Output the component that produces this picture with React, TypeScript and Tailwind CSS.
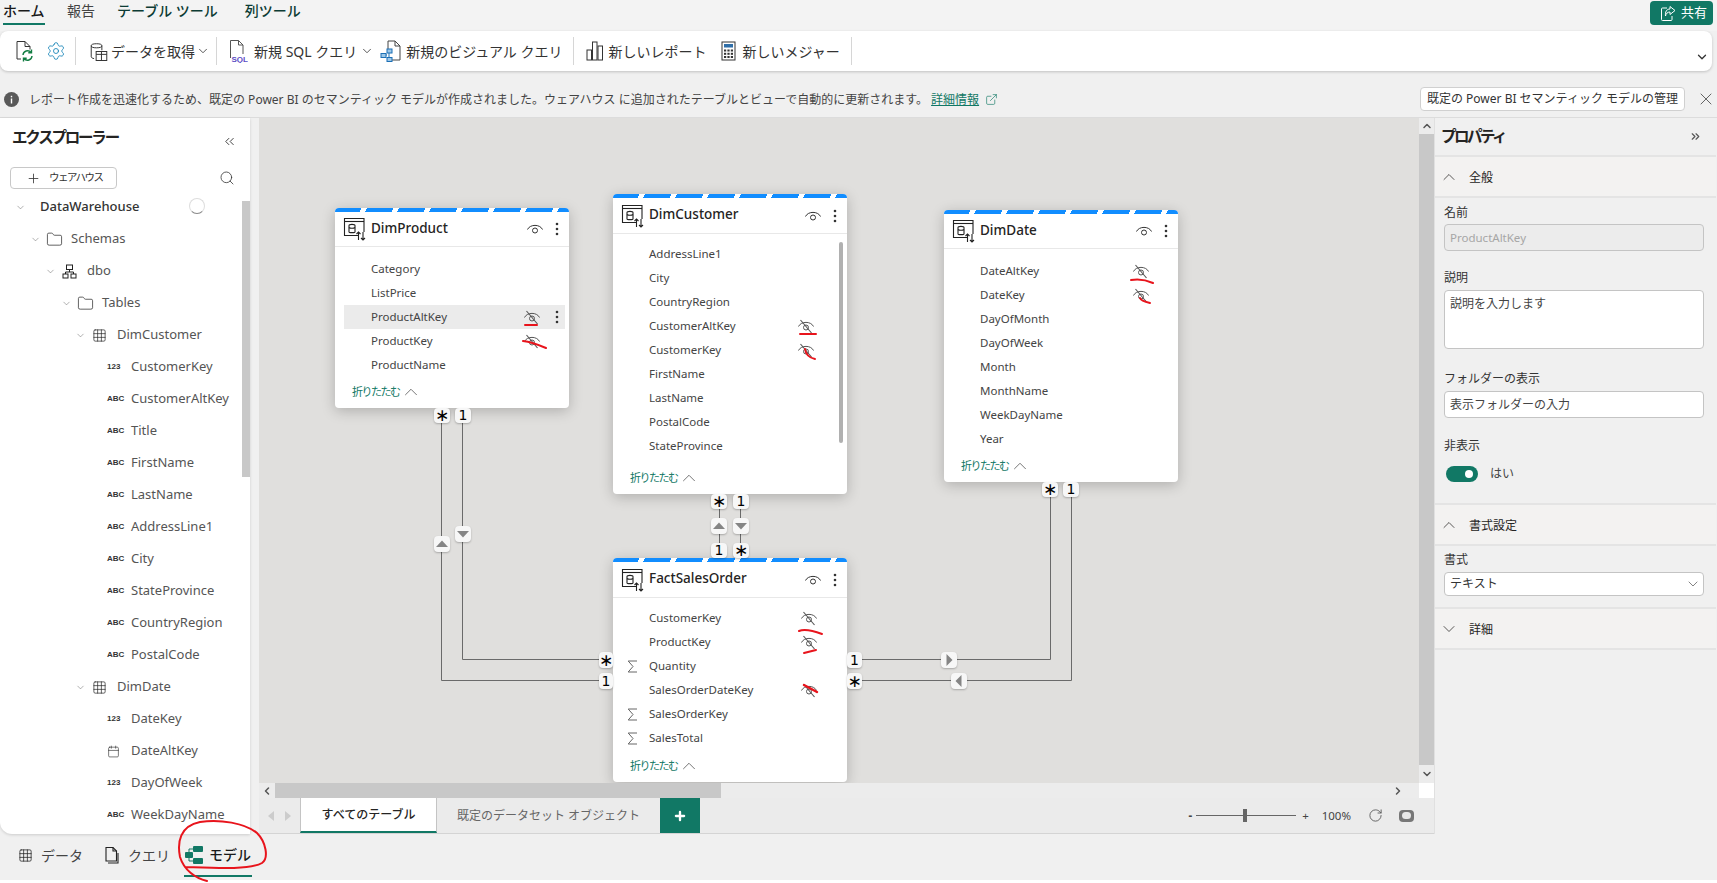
import React from "react";
import { ChevronDown, ChevronUp, ChevronsLeft, ChevronsRight, Plus, Search, X, RotateCw, ExternalLink, Grid3x3, Folder, Calendar, Settings } from "lucide-react";

const Eye = ({ hidden = false }: { hidden?: boolean }) => (
  <svg width="16" height="16" viewBox="0 0 16 16" fill="none" stroke={hidden ? "#555" : "#333"} strokeWidth="1">
    <path d="M0.5 8.5C3 3 13 3 15.500 8.500" />
    <circle cx="8" cy="9.500" r="2.500" />
    {hidden && <path d="M2.500 2L13.500 15" strokeWidth="1.100" />}
  </svg>
);

const Kebab = () => (
  <svg width="4" height="14" viewBox="0 0 4 14" fill="#333"><circle cx="2" cy="2" r="1.300" /><circle cx="2" cy="7" r="1.300" /><circle cx="2" cy="12" r="1.300" /></svg>
);

const TableIcon = () => (
  <svg width="24" height="24" viewBox="0 0 24 24" fill="none" stroke="#222" strokeWidth="1.100">
    <path d="M16 18.500H1.500V1.500H21V15" />
    <path d="M1.500 4.500H21" />
    <path d="M6 8.500c0-1.500 6-1.500 6 0v6.500c0 1-6 1-6 0z" />
    <path d="M6 10.500c1 1 5 1 6 0" />
    <path d="M15.500 23V15M13.500 17l2-2 2 2" />
    <path d="M20 15v8M18 21l2 2 2-2" />
  </svg>
);

const Sigma = () => (
  <svg width="11" height="13" viewBox="0 0 11 13" fill="none" stroke="#666" strokeWidth="1"><path d="M10 1H1.200L6 6.500 1.200 12H10" /></svg>
);

type Col = { name: string; hidden?: boolean; sigma?: boolean; hover?: boolean };

const TableNode = ({ title, cols, pos, eyeMargin, scroll, pt }: { title: string; cols: Col[]; pos: string; eyeMargin: string; scroll?: boolean; pt: string }) => (
  <div className={`absolute ${pos} w-[234px] bg-white rounded-sm flex flex-col shadow-[0_3px_14px_rgba(0,0,0,0.22)]`}>
    <div className="h-1 rounded-t-sm bg-[repeating-linear-gradient(115deg,#118dff_0,#118dff_24px,#ffffff_24px,#ffffff_29px)]" />
    <div className="h-[35px] flex items-center pl-2 border-b border-[#e8e8e8] box-content">
      <TableIcon />
      <span className="ml-[4px] flex-1 text-[13.5px] font-medium text-[#252423] -mt-[2px]">{title}</span>
      <span className="mr-[12px]"><Eye /></span>
      <span className="mr-[10px]"><Kebab /></span>
    </div>
    <div className={`flex flex-col ${pt}`}>
      {cols.map((c) => (
        <div key={c.name} className={`h-6 flex items-center text-[11.5px] text-[#444] ml-[9px] ${c.hover ? "bg-[#ebebeb] mr-[4px]" : "mr-[9px]"}`}>
          <span className="w-[27px] pl-[5px] flex items-center">{c.sigma && <Sigma />}</span>
          <span className="flex-1">{c.name}</span>
          {c.hidden && <span className={c.hover ? "mr-[25px]" : eyeMargin}><Eye hidden /></span>}
          {c.hover && <span className="absolute left-[220px]"><Kebab /></span>}
        </div>
      ))}
    </div>
    {scroll && <div className="absolute right-[4px] top-[48px] w-1 h-[201px] rounded bg-[#b0b0b0]" />}
    <div className="mt-auto h-8 flex items-center pl-[17px] text-[11px] tracking-[-1.5px] text-[#117865]">
      折りたたむ <ChevronUp size={22} strokeWidth={0.800} className="text-[#444]" />
    </div>
  </div>
);

const Badge = ({ pos, children }: { pos: string; children: React.ReactNode }) => (
  <div className={`absolute ${pos} bg-[#f7f7f7] rounded-sm shadow-[0_1px_2px_rgba(0,0,0,0.25)] flex items-center justify-center text-[14px] text-black font-['DejaVu_Sans',sans-serif]`}>{children}</div>
);

const Star = () => <span className="text-[17px] leading-none">∗</span>;

const Tri = ({ dir }: { dir: "u" | "d" | "l" | "r" }) => {
  const d = { u: "M1 10L7 3.500L13 10Z", d: "M1 4L7 10.500L13 4Z", l: "M9.500 1L3.500 7L9.500 13Z", r: "M4.500 1L10.500 7L4.500 13Z" }[dir];
  return <svg width="14" height="14" viewBox="0 0 14 14" fill="#858585"><path d={d} /></svg>;
};

const Row = ({ indent, chevron, icon, label, bold }: { indent: string; chevron?: boolean; icon?: React.ReactNode; label: string; bold?: boolean }) => (
  <div className={`h-8 shrink-0 flex items-center text-[13px] ${bold ? "font-medium text-[#333]" : "text-[#555]"} ${indent}`}>
    {chevron && <ChevronDown size={11} strokeWidth={1} className="text-[#555] shrink-0" />}
    {icon}
    <span>{label}</span>
  </div>
);

const Typ = ({ t }: { t: string }) => (
  <span className="w-[24px] shrink-0 text-[8px] font-bold text-[#333] font-['Liberation_Sans',sans-serif]">{t}</span>
);

const ColRow = ({ t, label, cal }: { t?: string; label: string; cal?: boolean }) => (
  <Row indent="pl-[107px]" icon={cal ? <span className="w-[24px] shrink-0"><Calendar size={13} strokeWidth={1.200} className="text-[#333]" /></span> : <Typ t={t || ""} />} label={label} />
);

const FolderI = () => <Folder size={17} strokeWidth={1} className="text-[#222] ml-[5px] mr-[8px] shrink-0" />;
const GridI = () => <Grid3x3 size={15} strokeWidth={1.100} className="text-[#222] ml-[6px] mr-[10px] shrink-0" />;
const SchemaI = () => (
  <svg width="15" height="15" viewBox="0 0 15 15" fill="none" stroke="#222" strokeWidth="1" className="ml-[6px] mr-[10px] shrink-0">
    <rect x="4.500" y="1" width="6" height="4.500" /><rect x="1" y="10" width="5" height="4" /><rect x="9" y="10" width="5" height="4" />
    <path d="M7.500 5.500V8M3.500 10V8H11.500V10" />
  </svg>
);

const Sep = () => <div className="w-px h-7 bg-[#d6d6d6]" />;

const Explorer = () => (
  <div className="relative w-[250px] shrink-0 bg-white rounded-bl-xl shadow-[0_1px_3px_rgba(0,0,0,0.15)] overflow-hidden">
    <div className="flex items-center justify-between pl-3 pr-[13px] h-[40px]">
      <span className="text-[15.5px] tracking-[-2.2px] font-bold text-[#252423]">エクスプローラー</span>
      <ChevronsLeft size={15} strokeWidth={1.600} className="text-[#444] mt-[6px]" />
    </div>
    <div className="flex items-center justify-between pl-[10px] pr-[15px] mt-[9px]">
      <div className="w-[107px] h-[22px] border border-[#c8c8c8] rounded-sm flex items-center pl-[15px] gap-[8px]">
        <Plus size={15} strokeWidth={1.300} className="text-[#333]" />
        <span className="text-[10.5px] tracking-[-1.5px] text-[#333]">ウェアハウス</span>
      </div>
      <Search size={16} strokeWidth={1.200} className="text-[#333]" />
    </div>
    <div className="flex flex-col mt-[2px]">
      <Row indent="pl-[15px]" chevron bold icon={<span className="w-[14px] shrink-0" />} label="DataWarehouse" />
      <Row indent="pl-[30px]" chevron icon={<FolderI />} label="Schemas" />
      <Row indent="pl-[45px]" chevron icon={<SchemaI />} label="dbo" />
      <Row indent="pl-[61px]" chevron icon={<FolderI />} label="Tables" />
      <Row indent="pl-[75px]" chevron icon={<GridI />} label="DimCustomer" />
      <ColRow t="123" label="CustomerKey" />
      <ColRow t="ABC" label="CustomerAltKey" />
      <ColRow t="ABC" label="Title" />
      <ColRow t="ABC" label="FirstName" />
      <ColRow t="ABC" label="LastName" />
      <ColRow t="ABC" label="AddressLine1" />
      <ColRow t="ABC" label="City" />
      <ColRow t="ABC" label="StateProvince" />
      <ColRow t="ABC" label="CountryRegion" />
      <ColRow t="ABC" label="PostalCode" />
      <Row indent="pl-[75px]" chevron icon={<GridI />} label="DimDate" />
      <ColRow t="123" label="DateKey" />
      <ColRow cal label="DateAltKey" />
      <ColRow t="123" label="DayOfWeek" />
      <ColRow t="ABC" label="WeekDayName" />
    </div>
    <div className="absolute right-0 top-[83px] w-2 h-[276px] bg-[#c8c8c8]" />
    <div className="absolute left-[189px] top-[80px] w-4 h-4 rounded-full border border-[#ddd] border-b-[#888]" />
  </div>
);

const Section = ({ open, label }: { open?: boolean; label: string }) => (
  <div className="h-[41px] shrink-0 bg-[#f3f2f1] border-b-2 border-[#e4e4e4] flex items-center pl-[4px] text-[12px] text-[#252423]">
    {open ? <ChevronUp size={20} strokeWidth={0.900} /> : <ChevronDown size={20} strokeWidth={0.900} />}
    <span className="ml-[10px] pt-[3px]">{label}</span>
  </div>
);

const Label = ({ children, cls }: { children: React.ReactNode; cls: string }) => (
  <div className={`h-[18px] text-[12px] leading-[18px] text-[#333] ${cls}`}>{children}</div>
);

const Properties = () => (
  <div className="w-[282px] shrink-0 bg-[#f0f0f0] border-l border-[#e0e0e0] flex flex-col">
    <div className="h-[39px] shrink-0 border-b-2 border-[#e4e4e4] flex items-center justify-between pl-[6px] pr-[14px]">
      <span className="text-[15.5px] tracking-[-2.5px] font-bold text-[#252423]">プロパティ</span>
      <ChevronsRight size={13} strokeWidth={2.200} className="text-[#555]" />
    </div>
    <Section open label="全般" />
    <div className="pl-[9px] h-[307px] shrink-0 border-b-2 border-[#e4e4e4]">
      <Label cls="mt-[6px]">名前</Label>
      <div className="mt-[2px] w-[260px] h-[27px] bg-[#ececec] border border-[#c4c4c4] rounded-sm flex items-center pl-[5px] text-[11.5px] text-[#a6a6a6]">ProductAltKey</div>
      <Label cls="mt-[18px]">説明</Label>
      <div className="mt-[3px] w-[260px] h-[59px] bg-white border border-[#c4c4c4] rounded-sm pl-[5px] pt-[4px] text-[12px] text-[#444]">説明を入力します</div>
      <Label cls="mt-[21px]">フォルダーの表示</Label>
      <div className="mt-[3px] w-[260px] h-[27px] bg-white border border-[#c4c4c4] rounded-sm flex items-center pl-[5px] text-[12px] text-[#444]">表示フォルダーの入力</div>
      <Label cls="mt-[19px]">非表示</Label>
      <div className="mt-[10px] flex items-center">
        <div className="ml-[2px] w-8 h-4 rounded-full bg-[#117865] flex items-center justify-end pr-[5px]"><div className="w-2 h-2 rounded-full bg-white" /></div>
        <span className="ml-[12px] text-[12px] text-[#444]">はい</span>
      </div>
    </div>
    <Section open label="書式設定" />
    <div className="pl-[9px] h-[63px] shrink-0 border-b-2 border-[#e4e4e4]">
      <Label cls="mt-[5px]">書式</Label>
      <div className="mt-[3px] w-[260px] h-[24px] bg-white border border-[#c4c4c4] rounded-sm flex items-center justify-between pl-[5px] pr-[2px] text-[12px] text-[#333]">
        テキスト <ChevronDown size={16} strokeWidth={1} className="text-[#444]" />
      </div>
    </div>
    <Section label="詳細" />
  </div>
);

const DocRefresh = () => (
  <svg width="20" height="22" viewBox="0 0 20 22" fill="none" stroke="#333" strokeWidth="1">
    <path d="M6 19H2V1.500h8l5 5v3M10 1.500v5h5" />
    <path d="M8 15a4.500 4.500 0 0 1 8-2.500M16.500 9.500v3.200h-3.200" stroke="#107c41" strokeWidth="1.400" />
    <path d="M17 16a4.500 4.500 0 0 1-8 2.500M8.500 21.500v-3.200h3.200" stroke="#107c41" strokeWidth="1.400" />
  </svg>
);
const GetData = () => (
  <svg width="18" height="19" viewBox="0 0 22 23" fill="none" stroke="#333" strokeWidth="1.200">
    <ellipse cx="8" cy="4.500" rx="6.500" ry="2.500" />
    <path d="M1.500 4.500V18c0 1 1.500 1.800 3.500 2.200M14.500 4.500V10" />
    <rect x="7.500" y="11.500" width="13" height="11" fill="#fff" />
    <path d="M7.500 15h13M14 11.500v11" />
  </svg>
);
const SqlDoc = () => (
  <svg width="20" height="24" viewBox="0 0 20 24" fill="none" stroke="#555" strokeWidth="1">
    <path d="M2.500 19V1.500h8l4.500 4.500v9M10.500 1.500v4.500h4.500" />
    <text x="3.500" y="23" fontSize="8" fontWeight="700" fill="#5b4cc4" stroke="none" fontFamily="Liberation Sans, sans-serif">SQL</text>
  </svg>
);
const VisDoc = () => (
  <svg width="22" height="24" viewBox="0 0 22 24" fill="none" stroke="#444" strokeWidth="1">
    <path d="M8 2H15l5 5v14H11M15 2v5h5M8 2v9" />
    <g fill="#9cc7e8" stroke="#1b6fb5"><rect x="7" y="10" width="5" height="4" /><rect x="1" y="14.500" width="5" height="4" /><rect x="7" y="18.500" width="5" height="4" /></g>
    <path d="M6 16h1M9 14v4.500" stroke="#1b6fb5" />
  </svg>
);
const Report = () => (
  <svg width="18" height="20" viewBox="0 0 18 20" fill="none" stroke="#333" strokeWidth="1"><rect x="1" y="9" width="4.500" height="10" /><rect x="6.500" y="1" width="4.500" height="18" /><rect x="12" y="5" width="4.500" height="14" /></svg>
);
const Calc = () => (
  <svg width="15" height="20" viewBox="0 0 15 20" fill="none" stroke="#333" strokeWidth="1">
    <rect x="1" y="1" width="13" height="18" />
    <rect x="3" y="3" width="9" height="3.500" fill="#2f6ea8" stroke="none" />
    <g fill="#333" stroke="none">
      <rect x="3" y="8.500" width="2.200" height="2" /><rect x="6.400" y="8.500" width="2.200" height="2" /><rect x="9.800" y="8.500" width="2.200" height="2" />
      <rect x="3" y="11.800" width="2.200" height="2" /><rect x="6.400" y="11.800" width="2.200" height="2" /><rect x="9.800" y="11.800" width="2.200" height="2" />
      <rect x="3" y="15" width="2.200" height="2" /><rect x="6.400" y="15" width="2.200" height="2" /><rect x="9.800" y="15" width="2.200" height="2" />
    </g>
  </svg>
);
const ModelIcon = () => (
  <svg width="20" height="20" viewBox="0 0 20 20" fill="none">
    <g fill="#117865"><rect x="9" y="1" width="10" height="6" rx="1" /><rect x="1" y="7" width="8" height="6" rx="1" /><rect x="9" y="13" width="10" height="6" rx="1" /></g>
    <path d="M5 7V4h4M5 13v3h4" stroke="#117865" />
  </svg>
);
const ShareI = () => (
  <svg width="16" height="17" viewBox="0 0 16 17" fill="none" stroke="#fff" strokeWidth="1">
    <path d="M7 3H2.500A1 1 0 0 0 1.500 4V14.500A1 1 0 0 0 2.500 15.500H11A1 1 0 0 0 12 14.500V11" />
    <path d="M10 1.500L15 5.500L10 9.500V7C7.500 7 6 8.500 5.500 11C5 7 6.500 4 10 4Z" />
  </svg>
);
const InfoDot = () => (
  <svg width="15" height="15" viewBox="0 0 15 15" className="ml-[4px] shrink-0">
    <circle cx="7.500" cy="7.500" r="7.500" fill="#595959" />
    <rect x="6.800" y="6.500" width="1.400" height="5" fill="#fff" />
    <rect x="6.800" y="3.800" width="1.400" height="1.500" fill="#fff" />
  </svg>
);

const Diagram = () => (
  <div className="relative flex-1 bg-[#e0dfdd] overflow-hidden">
    <svg className="absolute inset-0 w-full h-full" fill="none" stroke="#6a6a6a" strokeWidth="1">
      <path d="M182.500 305V562.500H340" />
      <path d="M203.500 305V541.500H340" />
      <path d="M460.500 391V425M481.500 391V425" />
      <path d="M603 541.500H791.500V379" />
      <path d="M603 562.500H812.500V379" />
    </svg>
    <TableNode title="DimProduct" pt="pt-[9.5px]" pos="left-[76px] top-[90px] h-[200px]" eyeMargin="mr-[20px]" cols={[
      { name: "Category" }, { name: "ListPrice" }, { name: "ProductAltKey", hidden: true, hover: true }, { name: "ProductKey", hidden: true }, { name: "ProductName" },
    ]} />
    <TableNode title="DimCustomer" pt="pt-[8px]" scroll pos="left-[354px] top-[76px] h-[300px]" eyeMargin="mr-[24px]" cols={[
      { name: "AddressLine1" }, { name: "City" }, { name: "CountryRegion" }, { name: "CustomerAltKey", hidden: true }, { name: "CustomerKey", hidden: true }, { name: "FirstName" }, { name: "LastName" }, { name: "PostalCode" }, { name: "StateProvince" },
    ]} />
    <TableNode title="DimDate" pt="pt-[9.5px]" pos="left-[685px] top-[92px] h-[272px]" eyeMargin="mr-[20px]" cols={[
      { name: "DateAltKey", hidden: true }, { name: "DateKey", hidden: true }, { name: "DayOfMonth" }, { name: "DayOfWeek" }, { name: "Month" }, { name: "MonthName" }, { name: "WeekDayName" }, { name: "Year" },
    ]} />
    <TableNode title="FactSalesOrder" pt="pt-[8px]" pos="left-[354px] top-[440px] h-[224px]" eyeMargin="mr-[21px]" cols={[
      { name: "CustomerKey", hidden: true }, { name: "ProductKey", hidden: true }, { name: "Quantity", sigma: true }, { name: "SalesOrderDateKey", hidden: true }, { name: "SalesOrderKey", sigma: true }, { name: "SalesTotal", sigma: true },
    ]} />
    <Badge pos="left-[175px] top-[290px] w-4 h-[15px]"><Star /></Badge>
    <Badge pos="left-[196px] top-[290px] w-4 h-[15px]">1</Badge>
    <Badge pos="left-[175px] top-[418px] w-4 h-4"><Tri dir="u" /></Badge>
    <Badge pos="left-[196px] top-[408px] w-4 h-4"><Tri dir="d" /></Badge>
    <Badge pos="left-[452px] top-[376px] w-4 h-[15px]"><Star /></Badge>
    <Badge pos="left-[474px] top-[376px] w-4 h-[15px]">1</Badge>
    <Badge pos="left-[452px] top-[400px] w-4 h-4"><Tri dir="u" /></Badge>
    <Badge pos="left-[474px] top-[400px] w-4 h-4"><Tri dir="d" /></Badge>
    <Badge pos="left-[452px] top-[425px] w-4 h-[15px]">1</Badge>
    <Badge pos="left-[474px] top-[425px] w-4 h-[15px]"><Star /></Badge>
    <Badge pos="left-[340px] top-[534px] w-[14px] h-4"><Star /></Badge>
    <Badge pos="left-[340px] top-[555px] w-[14px] h-4">1</Badge>
    <Badge pos="left-[588px] top-[534px] w-[15px] h-4">1</Badge>
    <Badge pos="left-[588px] top-[555px] w-[15px] h-4"><Star /></Badge>
    <Badge pos="left-[682px] top-[534px] w-4 h-4"><Tri dir="r" /></Badge>
    <Badge pos="left-[692px] top-[555px] w-4 h-4"><Tri dir="l" /></Badge>
    <Badge pos="left-[783px] top-[364px] w-4 h-[15px]"><Star /></Badge>
    <Badge pos="left-[804px] top-[364px] w-4 h-[15px]">1</Badge>
  </div>
);

const Tri2 = () => <svg width="8" height="12" viewBox="0 0 8 12" fill="#ccc"><path d="M7 1L1 6l6 5z" /></svg>;
const Tri3 = () => <svg width="8" height="12" viewBox="0 0 8 12" fill="#ccc"><path d="M1 1l6 5-6 5z" /></svg>;

const Center = () => (
  <div className="w-[1175px] shrink-0 flex flex-col ml-[9px]">
    <div className="h-[665px] shrink-0 flex">
      <Diagram />
      <div className="w-[15px] shrink-0 bg-[#c8c8c8] flex flex-col justify-between">
        <div className="h-4 bg-[#ececec] flex items-center justify-center"><ChevronUp size={12} strokeWidth={3} className="text-[#555]" /></div>
        <div className="h-[18px] bg-[#ececec] flex items-center justify-center"><ChevronDown size={12} strokeWidth={3} className="text-[#555]" /></div>
      </div>
    </div>
    <div className="h-[15px] shrink-0 flex bg-[#ececec]">
      <div className="w-4 flex items-center justify-center"><ChevronDown size={12} strokeWidth={3} className="text-[#555] rotate-90" /></div>
      <div className="w-[446px] bg-[#c8c8c8]" />
      <div className="flex-1 flex items-center justify-end pr-[15px]"><ChevronDown size={12} strokeWidth={3} className="text-[#555] -rotate-90" /></div>
      <div className="w-[15px] bg-white" />
    </div>
    <div className="h-[36px] shrink-0 flex items-stretch bg-[#ebebeb] border-b border-[#d4d4d4]">
      <div className="w-[41px] flex items-center justify-center gap-[9px]"><Tri2 /><Tri3 /></div>
      <div className="w-[137px] bg-white border-l border-r border-[#c4c4c4] border-b-2 border-b-[#117865] flex items-center justify-center text-[12px] font-medium text-[#252423]">すべてのテーブル</div>
      <div className="w-[223px] flex items-center justify-center text-[12px] text-[#666]">既定のデータセット オブジェクト</div>
      <div className="w-[40px] bg-[#117865] flex items-center justify-center"><Plus size={14} strokeWidth={4} className="text-white" /></div>
      <div className="flex-1 flex items-center justify-end text-[11.5px] text-[#444]">
        <span className="font-bold">-</span>
        <div className="relative ml-[4px] w-[100px] h-px bg-[#666]"><div className="absolute left-[47px] -top-[6px] w-1 h-[13px] bg-[#666]" /></div>
        <span className="ml-[6px]">+</span>
        <span className="ml-[13px]">100%</span>
        <RotateCw size={15} strokeWidth={1.400} className="ml-[17px] text-[#555]" />
        <div className="ml-[16px] mr-[20px] w-[15px] h-[12px] bg-[#777] rounded-sm flex items-center justify-center"><div className="w-[9px] h-[7px] rounded-full bg-[#e8e8e8]" /></div>
      </div>
    </div>
  </div>
);

const Redlines = () => (
  <svg className="absolute inset-0 w-full h-full pointer-events-none" fill="none" stroke="#e8141c" strokeWidth="2" strokeLinecap="round">
    <path d="M525 325H537" />
    <path d="M523 341Q532 342 546 348" />
    <path d="M800 334H816" />
    <path d="M805 349Q806 357 815 359" />
    <path d="M1131 280Q1142 278 1153 283" />
    <path d="M1140 298Q1141 301 1150 303" />
    <path d="M799 631Q806 628 822 634" />
    <path d="M804 653L816 650" />
    <path d="M804 685L817 692" strokeWidth="2.500" />
    <path d="M207 881C195 878 184 870 180 857C177 842 180 826 200 822C220 819 245 823 257 833C266 842 269 858 262 863C250 870 215 868 185 867" />
  </svg>
);

export default function App() {
  return (
    <div className="relative w-[1717px] h-[883px] bg-white overflow-hidden font-['Noto_Sans','Noto_Sans_CJK_JP',sans-serif]">
      <div className="h-[880px] bg-[#f0f0f0] flex flex-col">
        <div className="h-[31px] shrink-0 bg-[#f3f3f3] flex items-start text-[14px] text-[#0c3b34]">
          <div className="ml-[3px] h-[25px] w-[42px] border-b-[2px] border-[#117865] font-medium leading-[22px] text-[#1a1a1a]">ホーム</div>
          <div className="ml-[22px] leading-[22px] text-[#444]">報告</div>
          <div className="ml-[22px] leading-[22px] font-medium">テーブル ツール</div>
          <div className="ml-[27px] leading-[22px] font-medium">列ツール</div>
          <div className="ml-auto mr-[4px] mt-px w-[63px] h-6 rounded bg-[#117865] flex items-center pl-[10px] gap-[5px] text-[13px] text-white">
            <ShareI /> 共有
          </div>
        </div>
        <div className="relative h-[40px] shrink-0 mr-[5px] bg-white rounded-lg shadow-[0_1px_3px_rgba(0,0,0,0.2)] flex items-center text-[14px] text-[#333]">
          <span className="ml-[15px]"><DocRefresh /></span>
          <Settings size={20} strokeWidth={1} className="ml-[11px] text-[#0f7fb4]" />
          <span className="ml-[9px]"><Sep /></span>
          <span className="ml-[14px]"><GetData /></span>
          <span className="ml-[3px]">データを取得</span>
          <ChevronDown size={14} strokeWidth={1.400} className="ml-[1px]" />
          <span className="ml-[6px]"><Sep /></span>
          <span className="ml-[11px]"><SqlDoc /></span>
          <span className="ml-[6px]">新規 SQL クエリ</span>
          <ChevronDown size={14} strokeWidth={1.400} className="ml-[3px]" />
          <span className="ml-[6px]"><VisDoc /></span>
          <span className="ml-[4px]">新規のビジュアル クエリ</span>
          <span className="ml-[10px]"><Sep /></span>
          <span className="ml-[12px]"><Report /></span>
          <span className="ml-[5px]">新しいレポート</span>
          <span className="ml-[14px]"><Calc /></span>
          <span className="ml-[7px]">新しいメジャー</span>
          <span className="ml-[11px]"><Sep /></span>
          <ChevronDown size={14} strokeWidth={2.200} className="ml-auto mr-[3px] mt-3" />
        </div>
        <div className="h-[47px] shrink-0 flex items-center border-b border-[#dcdcdc] pt-[10px] bg-[#f0f0f0]">
          <InfoDot />
          <span className="ml-[10px] mt-px text-[12px] text-[#444] whitespace-nowrap">レポート作成を迅速化するため、既定の Power BI のセマンティック モデルが作成されました。ウェアハウス に追加されたテーブルとビューで自動的に更新されます。</span>
          <span className="ml-[3px] mt-px text-[12px] text-[#117865] underline">詳細情報</span>
          <ExternalLink size={13} strokeWidth={1.200} className="ml-[6px] text-[#117865]" />
          <div className="ml-auto w-[265px] h-6 bg-white border border-[#d0d0d0] rounded-sm flex items-center justify-center text-[12px] text-[#333] whitespace-nowrap">既定の Power BI セマンティック モデルの管理</div>
          <X size={20} strokeWidth={0.900} className="ml-[11px] mr-px text-[#333]" />
        </div>
        <div className="h-[716px] shrink-0 flex">
          <Explorer />
          <Center />
          <Properties />
        </div>
        <div className="flex-1 flex items-start text-[14px] text-[#444]">
          <div className="ml-[18px] mt-[11px] h-5 flex items-center gap-[8px]"><Grid3x3 size={15} strokeWidth={1.200} className="text-[#222]" />データ</div>
          <div className="ml-[21px] mt-[11px] h-5 flex items-center gap-[9px]">
            <svg width="15" height="18" viewBox="0 0 15 18" fill="none" stroke="#222" strokeWidth="1.100"><path d="M2 15V1.500h7l3.500 3.500v10z" /><path d="M9 1.500V5h3.500M4 17h10V7" /></svg>
            クエリ
          </div>
          <div className="ml-[14px] mt-[11px] h-[32px] w-[68px] flex items-start gap-[5px] border-b-2 border-[#117865] text-[#1a1a1a] font-medium">
            <ModelIcon /> <span className="leading-[20px]">モデル</span>
          </div>
        </div>
      </div>
      <Redlines />
    </div>
  );
}
